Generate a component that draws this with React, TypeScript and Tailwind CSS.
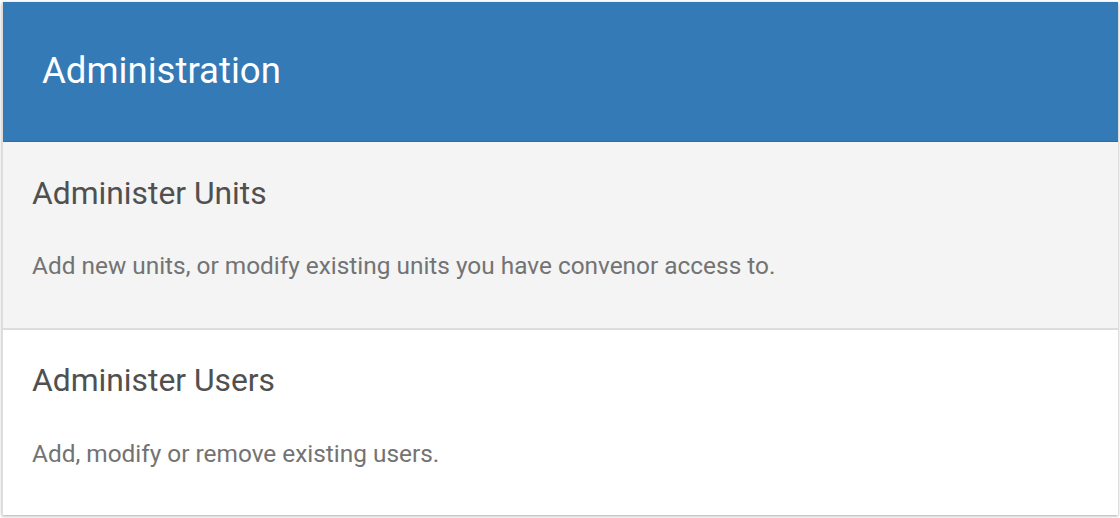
export default function App() {
  return (
    <div className="w-[1120px] h-[518px] bg-white p-[2px] pb-[3px]" style={{ fontFamily: 'Roboto, "Noto Sans", sans-serif' }}>
      <div className="h-full flex flex-col shadow-[0_1px_3px_rgba(0,0,0,0.35)] border-l border-[#ddd]">
        <div className="h-[140px] shrink-0 bg-[#337ab7] border-b border-[#2e6da4] flex items-center px-[39px]">
          <h1 className="text-[36.6px] text-white leading-none">Administration</h1>
        </div>
        <div className="h-[188px] shrink-0 bg-[#f4f4f4] border-b-2 border-[#dddddd] px-[29px] pt-[36px]">
          <h2 className="text-[31.8px] text-[#505050] leading-none">Administer Units</h2>
          <p className="mt-[44px] text-[24.4px] text-[#737373] leading-none">Add new units, or modify existing units you have convenor access to.</p>
        </div>
        <div className="flex-1 bg-white px-[29px] pt-[35px]">
          <h2 className="text-[31.8px] text-[#505050] leading-none">Administer Users</h2>
          <p className="mt-[45px] text-[24.4px] text-[#737373] leading-none">Add, modify or remove existing users.</p>
        </div>
      </div>
    </div>
  );
}
